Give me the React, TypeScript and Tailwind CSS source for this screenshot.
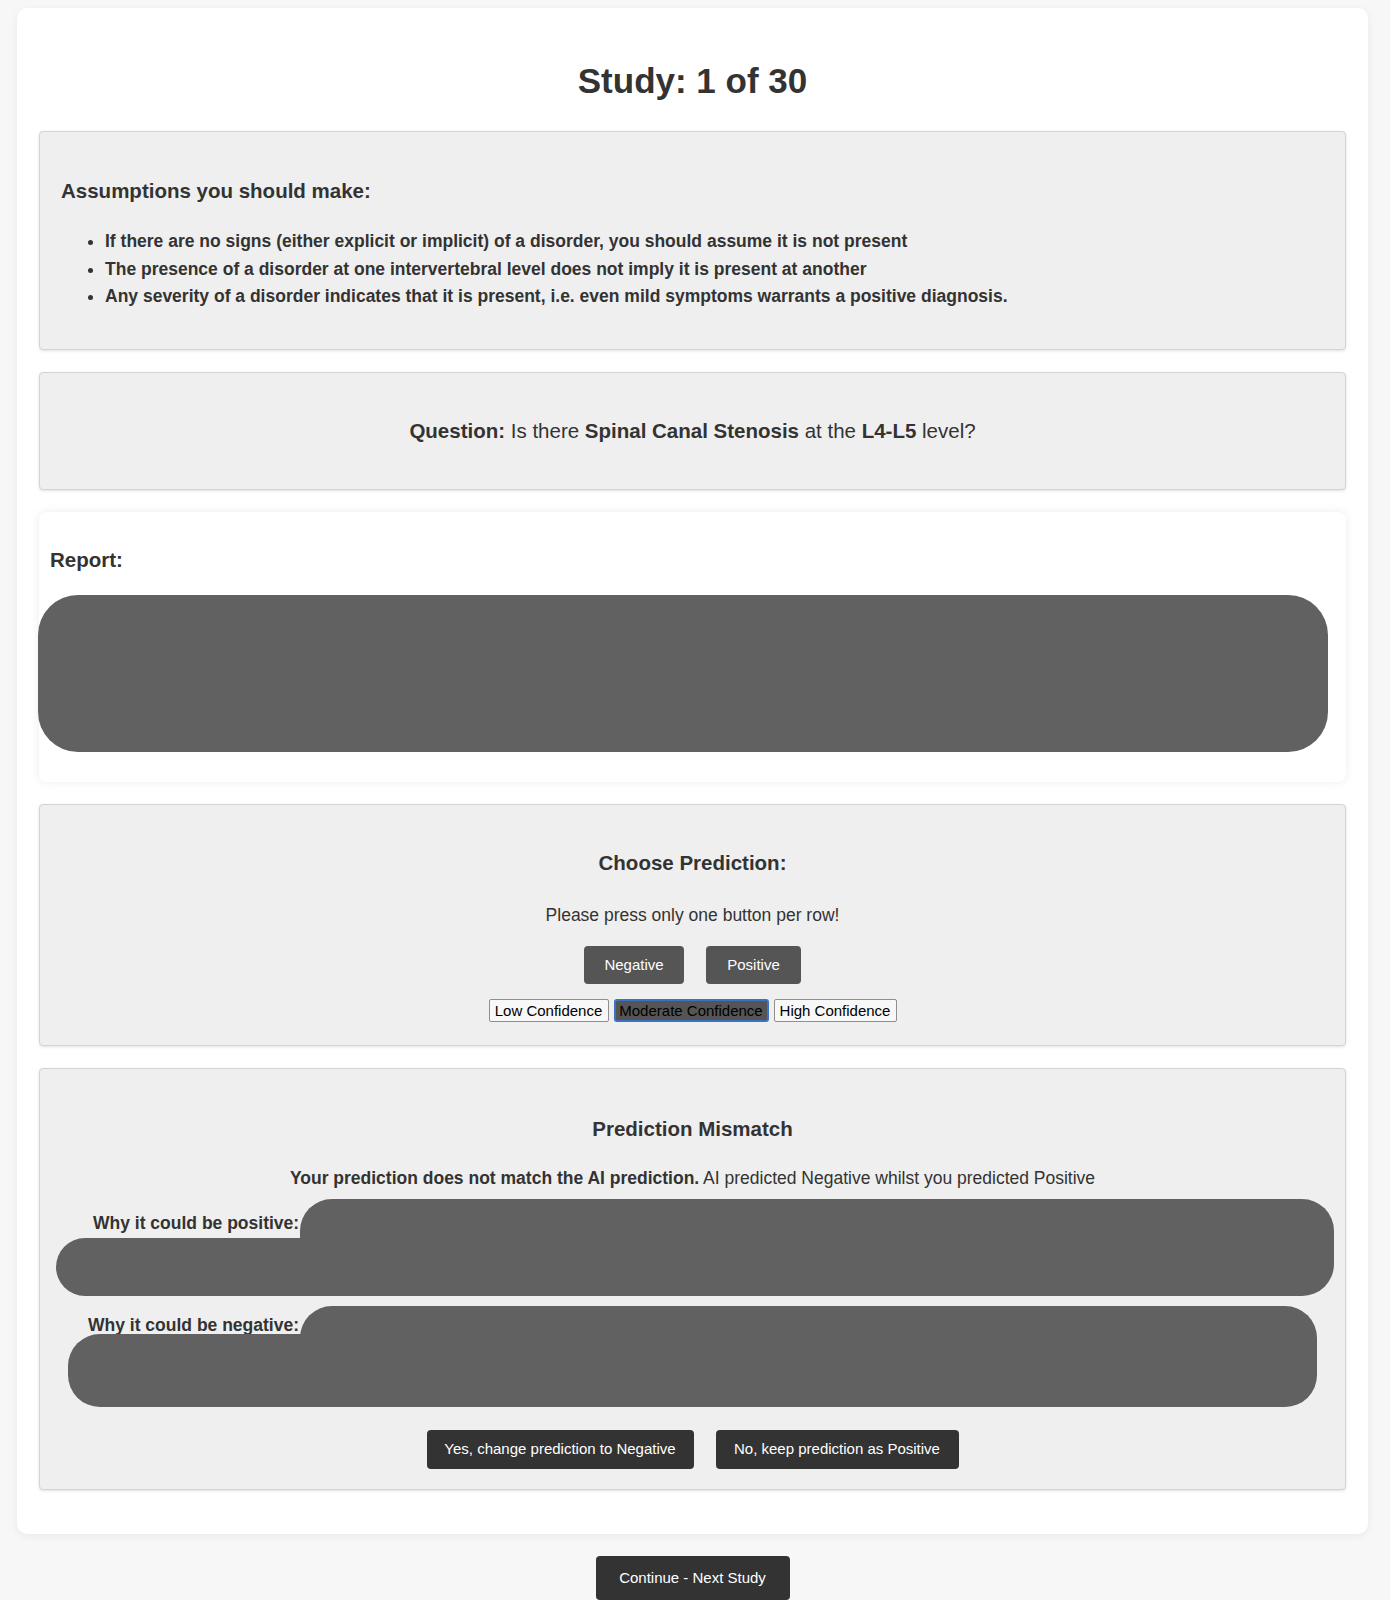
import React from "react";

const font = { fontFamily: '"Liberation Sans", Arial, Helvetica, sans-serif' };

const assumptions = [
  "If there are no signs (either explicit or implicit) of a disorder, you should assume it is not present",
  "The presence of a disorder at one intervertebral level does not imply it is present at another",
  "Any severity of a disorder indicates that it is present, i.e. even mild symptoms warrants a positive diagnosis.",
];

function Section({ children, className = "" }: { children: React.ReactNode; className?: string }) {
  return (
    <div className={`rounded-[4px] border border-[#d4d4d4] bg-[#efefef] shadow-[0_1px_3px_rgba(0,0,0,0.12)] ${className}`}>
      {children}
    </div>
  );
}

function Reason({
  label,
  labelLeft,
  labelTop,
  height,
  topRight,
  lowerLeft,
  lowerTop,
}: {
  label: string;
  labelLeft: string;
  labelTop: string;
  height: string;
  topRight: string;
  lowerLeft: string;
  lowerTop: string;
}) {
  return (
    <div className={`relative ${height}`}>
      <p className={`absolute ${labelLeft} ${labelTop} text-[17.5px] font-bold leading-[20px] text-[#333]`}>{label}</p>
      {/* redacted explanation */}
      <div className={`absolute left-[260px] top-0 bottom-0 ${topRight} rounded-[32px] bg-[#616161]`} />
      <div className={`absolute ${lowerLeft} ${lowerTop} bottom-0 w-[400px] rounded-l-[32px] bg-[#616161]`} />
    </div>
  );
}

export default function App() {
  return (
    <div style={font} className="min-h-screen bg-[#f7f7f7] pl-[17px] pr-[22px] pt-[8px] pb-[40px] text-[#333]">
      <div className="rounded-[10px] bg-white px-[22px] pt-[53px] pb-[44px] shadow-[0_2px_8px_rgba(0,0,0,0.06)]">
        <h1 className="text-center text-[35px] font-bold leading-[40px]">Study: 1 of 30</h1>

        <div className="mt-[30px] flex flex-col gap-[22px]">
          <Section className="h-[219px] px-[21px] pt-[47px]">
            <h3 className="text-[20.5px] font-bold leading-[24px]">Assumptions you should make:</h3>
            <ul className="mt-[25px] list-disc pl-[44px] text-[17.5px] font-bold leading-[27.5px]">
              {assumptions.map((a, i) => (
                <li key={i}>{a}</li>
              ))}
            </ul>
          </Section>

          <Section className="flex h-[118px] items-center justify-center">
            <p className="text-[20.5px] leading-[24px]">
              <b>Question:</b> Is there <b>Spinal Canal Stenosis</b> at the <b>L4-L5</b> level?
            </p>
          </Section>

          <div className="h-[270px] rounded-[8px] bg-white px-[11px] pt-[36px] shadow-[0_0_10px_rgba(0,0,0,0.08)]">
            <h3 className="text-[20.5px] font-bold leading-[24px]">Report:</h3>
            <div className="mt-[23px] ml-[-12px] h-[157px] w-[1290px] rounded-[40px] bg-[#616161]" />
          </div>

          <Section className="flex h-[242px] flex-col items-center pt-[46px]">
            <h3 className="text-[20.5px] font-bold leading-[24px]">Choose Prediction:</h3>
            <p className="mt-[30px] text-[17.5px] leading-[20px]">Please press only one button per row!</p>
            <div className="mt-[21px] flex gap-[22px]">
              <button className="h-[38px] w-[100px] rounded-[4px] bg-[#555] text-[15px] text-white">Negative</button>
              <button className="h-[38px] w-[95px] rounded-[4px] bg-[#555] text-[15px] text-white">Positive</button>
            </div>
            <div className="mt-[15px] flex gap-[5px] text-[15px] leading-[17px] text-black">
              <button className="h-[23px] w-[120px] rounded-[2px] border border-[#8f8f8f] bg-[#f8f8f8]">Low Confidence</button>
              <button className="h-[23px] w-[155px] rounded-[3px] border-2 border-[#3b73c4] bg-[#555]">Moderate Confidence</button>
              <button className="h-[23px] w-[123px] rounded-[2px] border border-[#8f8f8f] bg-[#f8f8f8]">High Confidence</button>
            </div>
          </Section>

          <Section className="h-[422px] pt-[48px]">
            <h3 className="text-center text-[20.5px] font-bold leading-[24px]">Prediction Mismatch</h3>
            <p className="mt-[27px] text-center text-[17.5px] leading-[20px]">
              <b>Your prediction does not match the AI prediction.</b> AI predicted Negative whilst you predicted Positive
            </p>
            <div className="mt-[11px]">
              <Reason
                label="Why it could be positive:"
                labelLeft="left-[53px]"
                labelTop="top-[14px]"
                height="h-[97px]"
                topRight="right-[11px]"
                lowerLeft="left-[16px]"
                lowerTop="top-[39px]"
              />
            </div>
            <div className="mt-[10px]">
              <Reason
                label="Why it could be negative:"
                labelLeft="left-[48px]"
                labelTop="top-[9px]"
                height="h-[101px]"
                topRight="right-[28px]"
                lowerLeft="left-[28px]"
                lowerTop="top-[28px]"
              />
            </div>
            <div className="mt-[23px] flex justify-center gap-[22px]">
              <button className="h-[39px] w-[267px] rounded-[4px] bg-[#333] text-[15px] text-white">
                Yes, change prediction to Negative
              </button>
              <button className="h-[39px] w-[243px] rounded-[4px] bg-[#333] text-[15px] text-white">
                No, keep prediction as Positive
              </button>
            </div>
          </Section>
        </div>
      </div>

      <div className="mt-[22px] flex justify-center">
        <button className="h-[44px] w-[194px] rounded-[4px] bg-[#333] text-[15px] text-white">Continue - Next Study</button>
      </div>
    </div>
  );
}
